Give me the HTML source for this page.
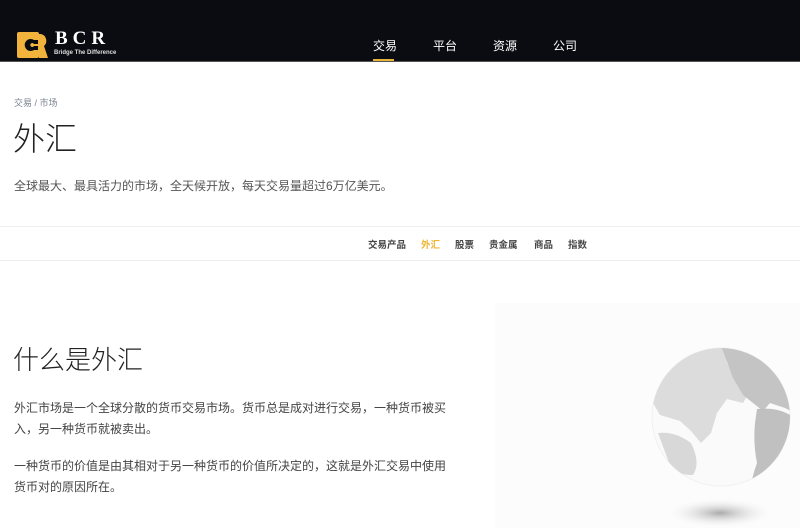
<!DOCTYPE html>
<html><head><meta charset="utf-8"><style>
*{margin:0;padding:0;box-sizing:border-box}
body{width:800px;height:528px;overflow:hidden;background:#fff;font-family:"Liberation Sans","Noto Sans CJK SC",sans-serif;position:relative}
.hd{position:absolute;left:0;top:0;width:800px;height:62px;background:#0a0c11;border-bottom:1px solid #555}
.nav{position:absolute;top:37px;font-size:12px;color:#fff}
.abs{position:absolute;white-space:nowrap}
</style></head><body>
<div class="hd">
  <svg class="abs" style="left:17px;top:32px" width="31" height="26" viewBox="0 0 31 26">
    <rect x="0" y="0" width="22" height="26" rx="2" fill="#f2b33d"/>
    <path d="M18 2h6a7 7 0 0 1 3 12l4 12h-9z" fill="#f2b33d"/>
    <path d="M17 8a6 6 0 1 0 0 10h4v-4h-4a2 2 0 1 1 0-2h4V8z" fill="#0a0c11"/>
  </svg>
  <div class="abs" style="left:55px;top:29px;color:#fff;font-family:'Liberation Serif',serif;font-weight:bold;font-size:19px;line-height:20px;letter-spacing:5px">BCR</div>
  <div class="abs" style="left:54px;top:50px;color:#ddd;font-size:6px;line-height:7px;font-weight:bold">Bridge The Difference</div>
  <div class="nav abs" style="left:373px">交易</div>
  <div class="nav abs" style="left:433px">平台</div>
  <div class="nav abs" style="left:493px">资源</div>
  <div class="nav abs" style="left:553px">公司</div>
  <div class="abs" style="left:373px;top:59px;width:21px;height:2px;background:#e8b33a"></div>
</div>
<div class="abs" style="left:14px;top:96px;font-size:9px;color:#7a8090">交易 / 市场</div>
<div class="abs" style="left:13px;top:114px;font-size:32px;color:#222;font-weight:300">外汇</div>
<div class="abs" style="left:14px;top:177px;font-size:12px;color:#555">全球最大、最具活力的市场，全天候开放，每天交易量超过6万亿美元。</div>
<div class="abs" style="left:0;top:226px;width:800px;height:1px;background:#eee"></div>
<div class="abs" style="left:0;top:260px;width:800px;height:1px;background:#eee"></div>
<div class="abs" style="left:368px;top:237px;font-size:9.5px;font-weight:bold;color:#444">交易产品</div>
<div class="abs" style="left:421px;top:237px;font-size:9.5px;font-weight:bold;color:#f0b530">外汇</div>
<div class="abs" style="left:455px;top:237px;font-size:9.5px;font-weight:bold;color:#444">股票</div>
<div class="abs" style="left:489px;top:237px;font-size:9.5px;font-weight:bold;color:#444">贵金属</div>
<div class="abs" style="left:534px;top:237px;font-size:9.5px;font-weight:bold;color:#444">商品</div>
<div class="abs" style="left:568px;top:237px;font-size:9.5px;font-weight:bold;color:#444">指数</div>
<div class="abs" style="left:495px;top:303px;width:305px;height:225px;background:#fcfcfc"></div>
<svg class="abs" style="left:495px;top:303px" width="305" height="225">
  <defs>
    <radialGradient id="sh"><stop offset="0" stop-color="#aaa"/><stop offset="1" stop-color="#fcfcfc" stop-opacity="0"/></radialGradient>
    <clipPath id="cp"><circle cx="226" cy="114" r="69"/></clipPath>
  </defs>
  <ellipse cx="225" cy="210" rx="55" ry="15" fill="url(#sh)"/>
  <circle cx="226" cy="114" r="69" fill="#fafafa" stroke="#f0f0f0"/>
  <g clip-path="url(#cp)">
    <path d="M150 40L228 40 232 60 240 75 255 88 248 100 232 96 222 110 216 130 206 140 196 128 185 118 165 112 158 100Z" fill="#dcdcdc"/>
    <path d="M225 40L300 40 300 110 290 105 275 100 268 108 258 100 248 92 238 75Z" fill="#c4c4c4"/>
    <path d="M262 106Q282 104 295 112 300 130 285 150 272 175 258 187 254 182 262 160 258 140 260 120Z" fill="#c0c0c0"/>
    <path d="M163 130Q180 128 196 140 206 160 198 172 184 172 176 165 166 160Z" fill="#d8d8d8"/>
    <path d="M213 186Q240 182 265 188 260 200 230 200 214 196Z" fill="#d0d0d0"/>
  </g>
</svg>
<div class="abs" style="left:13px;top:340px;font-size:26px;color:#222;font-weight:300">什么是外汇</div>
<div class="abs" style="left:14px;top:398px;font-size:12px;color:#444;line-height:20.5px;white-space:normal;width:440px">外汇市场是一个全球分散的货币交易市场。货币总是成对进行交易，一种货币被买入，另一种货币就被卖出。</div>
<div class="abs" style="left:14px;top:456px;font-size:12px;color:#444;line-height:20.5px;white-space:normal;width:440px">一种货币的价值是由其相对于另一种货币的价值所决定的，这就是外汇交易中使用货币对的原因所在。</div>
</body></html>
